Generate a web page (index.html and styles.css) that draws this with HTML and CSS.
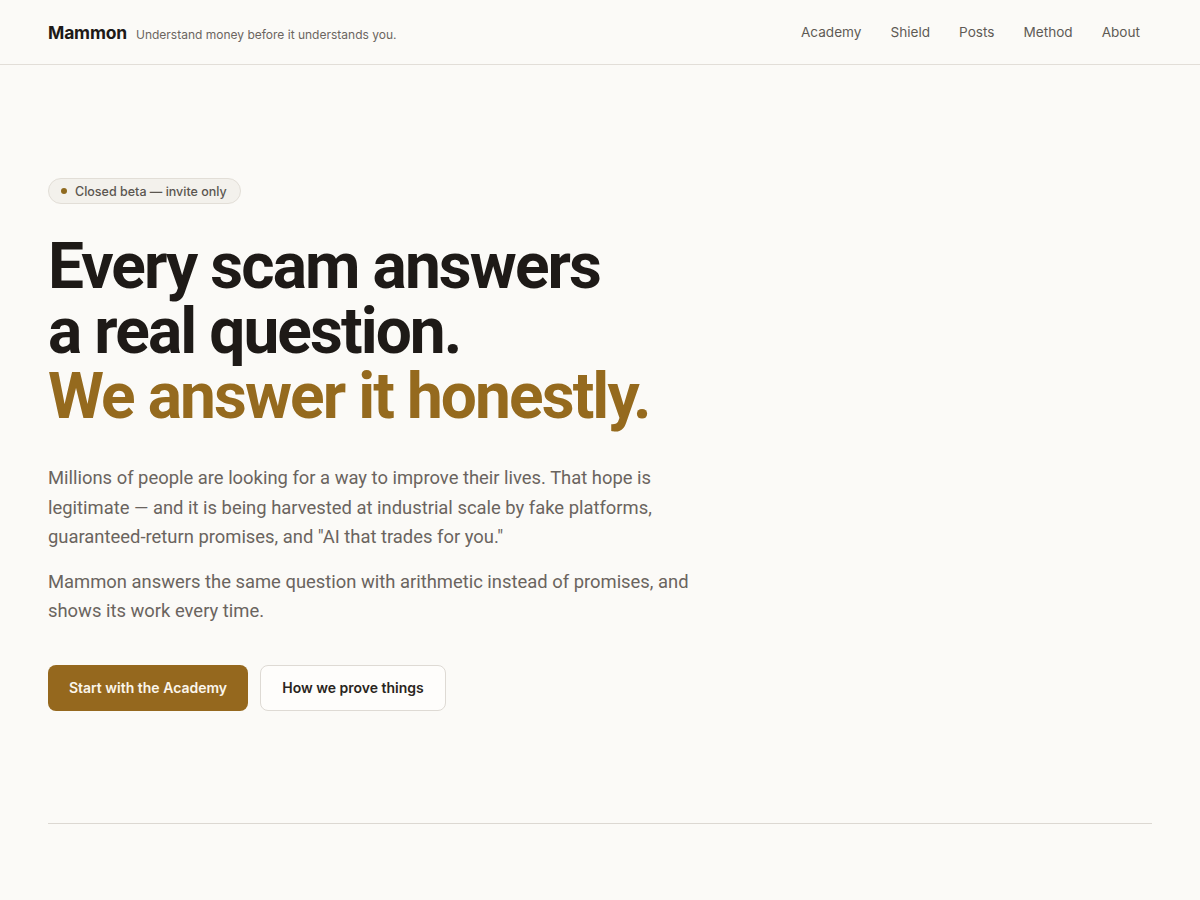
FILE: index.html
```html
<!DOCTYPE html>
<html lang="en">
<head>
<meta charset="utf-8">
<title>Mammon</title>
<link rel="stylesheet" href="styles.css">
</head>
<body>
<header class="site-header">
  <div class="brand">
    <span class="logo">Mammon</span>
    <span class="tagline">Understand money before it understands you.</span>
  </div>
  <nav class="nav">
    <a href="#">Academy</a>
    <a href="#">Shield</a>
    <a href="#">Posts</a>
    <a href="#">Method</a>
    <a href="#">About</a>
  </nav>
</header>
<main class="hero">
  <div class="badge"><span class="dot"></span>Closed beta — invite only</div>
  <h1 class="title">Every scam answers<br>a real question.<br><span class="accent">We answer it honestly.</span></h1>
  <p class="lead">Millions of people are looking for a way to improve their lives. That hope is legitimate — and it is being harvested at industrial scale by fake platforms, guaranteed-return promises, and "AI that trades for you."</p>
  <p class="lead">Mammon answers the same question with arithmetic instead of promises, and shows its work every time.</p>
  <div class="actions">
    <a class="btn btn-primary" href="#">Start with the Academy</a>
    <a class="btn btn-secondary" href="#">How we prove things</a>
  </div>
</main>
<div class="rule"></div>
</body>
</html>
```
FILE: styles.css
```css
* { box-sizing: border-box; }
html, body { margin: 0; padding: 0; }
body {
  background: #fbfaf7;
  color: #1e1a17;
  font-family: Inter, "Noto Sans", sans-serif;
}
a { text-decoration: none; color: inherit; }

.site-header {
  height: 65px;
  border-bottom: 1px solid #e2ded8;
  display: flex;
  align-items: center;
  justify-content: space-between;
  padding: 0 48px;
}
.brand { display: flex; align-items: baseline; gap: 9px; }
.logo { font-size: 17.5px; font-weight: 700; letter-spacing: -0.01em; color: #1e1a17; }
.tagline { font-size: 12px; color: #6b655f; }
.nav { display: flex; gap: 5px; }
.nav a { font-size: 13.6px; color: #5f5a55; padding: 6px 12px; }

.hero { padding: 113px 48px 0; }
.badge {
  display: inline-flex;
  align-items: center;
  gap: 8px;
  height: 26px;
  padding: 0 13px 0 12px;
  border: 1px solid #e2ded7;
  background: #f3f1ec;
  border-radius: 13px;
  font-size: 12.5px;
  font-weight: 500;
  color: #5b5650;
}
.dot { width: 6px; height: 6px; border-radius: 50%; background: #8f6a1f; }

.title {
  margin: 30px 0 0;
  font-family: Roboto, Inter, sans-serif;
  font-size: 64px;
  line-height: 65px;
  font-weight: 700;
  letter-spacing: -0.03em;
  color: #1e1a17;
}
.accent { color: #956a1e; }

.lead {
  margin: 34px 0 0;
  max-width: 650px;
  font-family: Roboto, sans-serif;
  font-size: 18.4px;
  line-height: 29.5px;
  color: #6a645e;
}
.lead + .lead { margin-top: 15px; }

.actions { display: flex; gap: 12px; margin-top: 39px; }
.btn {
  display: inline-flex;
  align-items: center;
  justify-content: center;
  height: 46px;
  border-radius: 8px;
  font-size: 14px;
  font-weight: 600;
}
.btn-primary { width: 200px; background: #95681e; color: #fbf6ec; }
.btn-secondary { width: 186px; background: #fefdfb; border: 1px solid #dedad4; color: #2a2520; }

.rule { margin: 112px 48px 0; height: 1px; background: #dcd8d2; }
```
